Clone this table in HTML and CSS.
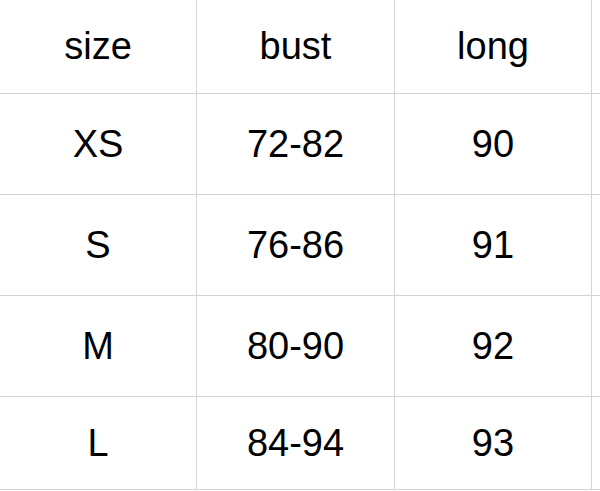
FILE: index.html
```html
<!DOCTYPE html>
<html>
<head>
<meta charset="utf-8">
<link rel="stylesheet" href="styles.css">
</head>
<body>
<div class="sheet">
  <div class="cell">size</div><div class="cell">bust</div><div class="cell">long</div><div class="cell edge"></div>
  <div class="cell">XS</div><div class="cell">72-82</div><div class="cell">90</div><div class="cell edge"></div>
  <div class="cell">S</div><div class="cell">76-86</div><div class="cell">91</div><div class="cell edge"></div>
  <div class="cell">M</div><div class="cell">80-90</div><div class="cell">92</div><div class="cell edge"></div>
  <div class="cell">L</div><div class="cell">84-94</div><div class="cell">93</div><div class="cell edge"></div>
</div>
</body>
</html>
```
FILE: styles.css
```css
html, body {
  margin: 0;
  padding: 0;
  background: #ffffff;
  overflow: hidden;
}
.sheet {
  display: grid;
  grid-template-columns: 197px 198px 197px 1fr;
  grid-template-rows: 94px 101px 101px 101px 93px;
  width: 600px;
  font-family: "Liberation Sans", Arial, sans-serif;
  font-size: 38px;
  color: #000000;
}
.cell {
  box-sizing: border-box;
  border-right: 1px solid #d4d4d4;
  border-bottom: 1px solid #d4d4d4;
  display: flex;
  align-items: center;
  justify-content: center;
}
.edge {
  border-right: none;
}
```
